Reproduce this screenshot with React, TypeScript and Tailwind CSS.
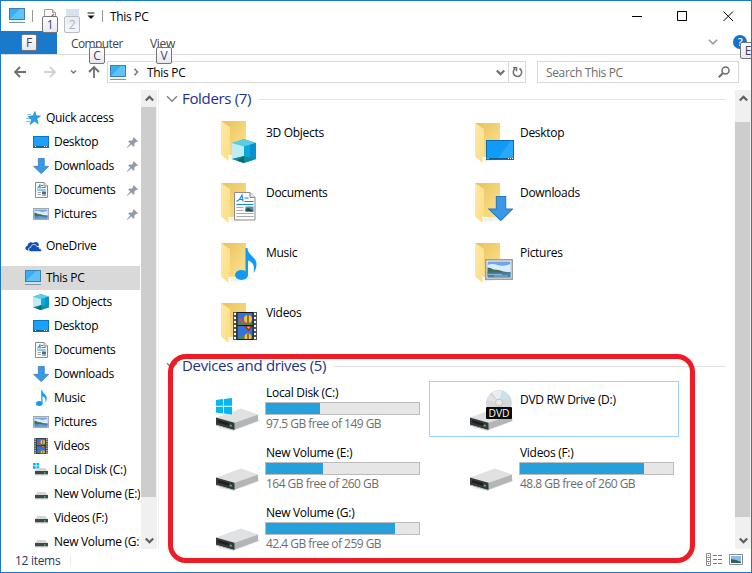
import React, { type ReactNode } from "react";

type P = { s?: number };

const Monitor = () => (
  <svg width="17" height="16" viewBox="0 0 17 16" className="shrink-0">
    <rect x="0.5" y="0.5" width="15" height="11" fill="#3aaef5" stroke="#3c7fae" />
    <path d="M1 11L11 1H15V11Z" fill="#5fc2fb" />
    <path d="M2 13h12" stroke="#dfe6ea" />
    <path d="M0 14.5h16" stroke="#7e98ab" />
  </svg>
);

const Desktop = () => (
  <svg width="16" height="12" viewBox="0 0 16 12" className="shrink-0">
    <rect x="0.5" y="0.5" width="15" height="11" fill="#1ba1f9" stroke="#0a74bd" />
    <path d="M1 10.5h14" stroke="#0a5d9c" />
    <path d="M2 10.5h1M11 10.5h1M13 10.5h1" stroke="#fff" />
  </svg>
);

const Down = ({ s = 16 }: P) => (
  <svg width={s} height={s} viewBox="0 0 24 24" className="shrink-0">
    <path d="M8 .5h9v12h6.5L12.300 23.500.8 12.500H8z" fill="#3b97e8" stroke="#2a78c2" />
  </svg>
);

const Doc = () => (
  <svg width="13" height="16" viewBox="0 0 13 16" className="shrink-0">
    <path d="M.5.5h8.500L12.500 4v11.500H.5z" fill="#fdfdfd" stroke="#8a8a8a" />
    <path d="M9 .5V4h3.500" fill="#e8e8e8" stroke="#8a8a8a" />
    <path d="M2.500 6.500L5 2.500v4M3.500 5h2M6 3.500h2M6.500 5.500h4M2.500 8h8" stroke="#2089d8" fill="none" />
    <path d="M2.500 10.500h3.500M2.500 12.500h3.500M7 13.500h4" stroke="#aaa" />
    <rect x="7" y="9.500" width="4" height="3" fill="#3c6e96" />
  </svg>
);

const Picture = ({ w = 16, h = 12 }: { w?: number; h?: number }) => (
  <svg width={w} height={h} viewBox="0 0 28 21" preserveAspectRatio="none" className="shrink-0">
    <rect x=".8" y=".8" width="26.400" height="19.400" fill="#fff" stroke="#9a9a9a" strokeWidth="1.500" />
    <rect x="2.500" y="2.500" width="23" height="16" fill="#6fa6f2" />
    <path d="M2.500 6q5-2 10 0t13-1v8h-23z" fill="#dcebf8" />
    <path d="M2.500 8.500q3 0 6 2l5 .5 5 1.500 7 1v1h-23z" fill="#3e6f56" />
    <path d="M2.500 13.500h23v5h-23z" fill="#4a7fa8" />
    <path d="M3 15.500h14M9 17h14" stroke="#87b4d4" />
  </svg>
);

const Note = ({ s = 16 }: P) => (
  <svg width={(s * 11) / 16} height={s} viewBox="0 0 22 32" className="shrink-0">
    <ellipse cx="6.500" cy="27" rx="6.500" ry="5" fill="#0f9bf5" />
    <path d="M10.500 27V0h2c0 7 9 9 9 16 0 4-1 6-3 9 1.500-7-.5-11-5.500-12.500V27z" fill="#0f9bf5" />
  </svg>
);

const Film = ({ w = 14, h = 16 }: { w?: number; h?: number }) => (
  <svg width={w} height={h} viewBox="0 0 24 28" preserveAspectRatio="none" className="shrink-0">
    <path d="M0 0h24v28H0z" fill="#555" />
    <path d="M2 1v27M22 1v27" stroke="#f4f4f4" strokeWidth="2" strokeDasharray="2 2" />
    <path d="M4 1h16v12H4z" fill="#3671d6" />
    <path d="M4 14h16v13H4z" fill="#3671d6" />
    <path d="M4 10q3-2 5 0t11 0v3H4z" fill="#458a50" />
    <path d="M4 26q5-3 9-1t7 0v2H4z" fill="#458a50" />
    <circle cx="7.500" cy="8" r="2" fill="#c84a63" />
    <circle cx="10" cy="10.500" r="2" fill="#c84a63" />
    <circle cx="15" cy="7" r="4" fill="#edc92e" />
    <path d="M15 3v8M12 14h7l-3.500 4z" stroke="#9a2b1c" fill="#edc92e" strokeWidth="1.300" />
    <circle cx="15" cy="25" r="3.500" fill="#edc92e" />
    <path d="M15 22v5" stroke="#9a2b1c" strokeWidth="1.300" />
    <path d="M4 .5v27h16V.5zM4 13.500h16" fill="none" stroke="#161616" />
  </svg>
);

const Cube = ({ s = 16 }: P) => (
  <svg width={s} height={s} viewBox="0 0 24 24" className="shrink-0">
    <path d="M12 0l12 4v16l-12 4L0 20V4z" fill="#2bb5d3" />
    <path d="M0 4L12 0l12 4-12 3.500z" fill="#5fcbe0" />
    <path d="M0 4l12 3.500V17L0 20z" fill="#c0ecf2" />
    <path d="M12 7.500L24 4v16l-12-3z" fill="#08a9dc" />
    <path d="M18 5.800L24 4v16l-6-1.500z" fill="#0792ce" />
    <path d="M0 20l12-3 12 3-12 4z" fill="#0d8ba0" />
    <path d="M12 17v7l-7-2.300z" fill="#066a7c" />
  </svg>
);

const Star = () => (
  <svg width="15" height="14" viewBox="0 0 15 14" className="shrink-0">
    <path d="M9 .5l1 4.200 4.500.3-3.700 2.700 1.500 5L8.500 10.300 4 13.500l1.500-4.800L2 5.500l5-.8z" fill="#2b9fe9" stroke="#1b7fc9" strokeWidth=".6" />
    <path d="M1 3.500h4M0 7.500h4M0 10.500h4" stroke="#6ebcf0" strokeWidth=".9" />
  </svg>
);

const Cloud = () => (
  <svg width="17" height="11" viewBox="0 0 17 11" className="shrink-0">
    <path d="M3.500 9.500C-.5 9.500-.5 5.500 2.500 5 2.500 1.500 6 .2 8 2c3-2.200 6-.5 6 2.500" fill="#1450b0" />
    <path d="M6.500 10.700c-4 0-3.700-4.200-.8-4.300C6 3 11 2.500 12 5.500c2-.2 2.600 1 2.500 2 3 .5 2.500 3.200.5 3.200z" fill="#1450b0" stroke="#fff" strokeWidth=".8" />
  </svg>
);

const MiniDrive = ({ win = false }: { win?: boolean }) => (
  <svg width="16" height="16" viewBox="0 0 16 16" className="shrink-0">
    {win && <path d="M0 1h2.700v2.500H0zM3.500 1h2.700v2.500H3.500zM0 4.300h2.700v2.500H0zM3.500 4.300h2.700v2.500H3.500z" fill="#00b4f0" />}
    <path d="M4.500 6h8L15 9.500H2z" fill="#d5d7d8" />
    <path d="M2 9h13v3.500H2z" fill="#424648" />
    <path d="M2 12.500h13v.8H2z" fill="#c4c4c4" />
    <path d="M11 10.500h1.500v1.300H11z" fill="#3ee049" />
  </svg>
);

const Pin = () => (
  <svg width="11" height="11" viewBox="0 0 11 11" className="shrink-0">
    <path d="M6.500 0L11 4.300 9.800 5l-.6-.3L7.300 6.600l.2 2.300-.9.9-2.400-2.200L.6 10.700 0 10.800l.2-.8 3.100-3.400L1.200 4.400l.9-.9 2.400.2L6.300 1.900 5.900 1z" fill="#8e9ba8" />
  </svg>
);

const DriveArt = () => (
  <>
    <path d="M4 43l16 3 27-10-2-4z" fill="#ededed" />
    <path d="M3 32.500L28 23.500l17 6-23.500 8.300z" fill="#dfe1e3" />
    <path d="M21.500 37.800L45 29.500V36L20.500 45z" fill="#b3b5b7" />
    <path d="M3 32.500l18.500 5.300V45L3 39.800z" fill="#35393b" />
    <path d="M5 35l11 3.300v2.500L5 37.500z" fill="#1c1f20" />
    <path d="M3 39.800L21 45v.6L3 40.600z" fill="#a6a8a9" />
    <path d="M16.800 39.500l2 .5v1.700l-2-.5z" fill="#2fe03f" />
  </>
);

const Drive = ({ win = false, dvd = false }: { win?: boolean; dvd?: boolean }) => (
  <svg width="48" height="48" viewBox="0 0 48 48">
    <DriveArt />
    {win && <path d="M3 15l7-.9v6.700H3zM10.900 14L19 13v7.800h-8.100zM3 21.700h7v6.700l-7-1zM10.900 21.700H19v7.700l-8.100-1z" fill="#00b9f2" />}
    {dvd && (
      <>
        <circle cx="32" cy="18" r="12.500" fill="#d6d8da" stroke="#c0c2c4" strokeWidth=".5" />
        <path d="M32 18L37 6.500a12.500 12.500 0 0 1 5 4z" fill="#bdeaf2" />
        <path d="M32 18l-12-3a12.500 12.500 0 0 1 3-5.500z" fill="#eadcec" />
        <path d="M32 18l-7-10.500q5-3 10-1.500z" fill="#eceded" />
        <circle cx="32" cy="17.500" r="3.500" fill="#efefef" stroke="#b4b6b8" strokeWidth=".8" />
        <circle cx="32" cy="17.500" r="1.500" fill="#fff" stroke="#bbb" strokeWidth=".5" />
        <rect x="19" y="22" width="26" height="12" rx="1" fill="#0c0c0c" />
        <text x="32" y="32" textAnchor="middle" fontSize="11" letterSpacing="0" fill="#fff" fontFamily="Open Sans, Noto Sans, sans-serif" textLength="21" lengthAdjust="spacingAndGlyphs">DVD</text>
      </>
    )}
  </svg>
);

const Folder = ({ children, x, y, up = false }: { children: ReactNode; x: string; y: string; up?: boolean }) => (
  <div className="relative h-12 w-12">
    <svg width="48" height="48" viewBox="0 0 48 48">
      <defs>
        <linearGradient id="fb" x1="0" x2="1" y1="0" y2="1">
          <stop offset="0" stopColor="#e8c15a" />
          <stop offset=".6" stopColor="#f5d67b" />
          <stop offset="1" stopColor="#fce28e" />
        </linearGradient>
        <linearGradient id="ff" x1="0" x2="1" y1="0" y2="1">
          <stop offset="0" stopColor="#ffe9a6" />
          <stop offset="1" stopColor="#fbdc83" />
        </linearGradient>
      </defs>
      <g transform={up ? "translate(0 -2)" : undefined}>
        <path d="M16 40l20-2 4 3-22 3z" fill="#f1f1f1" />
        <path d="M8 5h25v34l-17 0z" fill="url(#fb)" />
        <path d="M8 5l9 6v26l-1.500 1v7L8 38.500z" fill="url(#ff)" />
      </g>
    </svg>
    <div className={`absolute ${x} ${y}`}>{children}</div>
  </div>
);

const BigDoc = () => (
  <svg width="22" height="29" viewBox="0 0 22 29">
    <path d="M.5.500h15.500l5 5V28H.5z" fill="#fcfcfc" stroke="#8b8b8b" />
    <path d="M16 .5v5h5" fill="#e4e4e4" stroke="#8b8b8b" />
    <path d="M2.500 9.500Q6 8 8 3l1 6.500M5 7.500h4M10.500 6h4M10.500 9.500h9M2.500 12.500h17" stroke="#1a86d4" fill="none" strokeWidth="1.100" />
    <path d="M2.500 15.500h7M2.500 18.500h7M2.500 21.500h17M2.500 24.500h17" stroke="#a9a9a9" />
    <rect x="11.500" y="14.500" width="8" height="5" fill="#4f8dbb" />
    <path d="M11.500 17l3-1 5 3v.5h-8z" fill="#235240" />
  </svg>
);

const BigDesktop = () => (
  <svg width="28" height="20" viewBox="0 0 28 20">
    <rect x=".5" y=".5" width="27" height="19" fill="#109bf6" stroke="#0b6cb3" />
    <path d="M12 18L25 1h2v17z" fill="#2aa9fb" />
    <path d="M1 18.500h26" stroke="#0a5c9b" />
    <path d="M1.500 18.500h1M22 18.500h1M24 18.500h1M26 18.500h1" stroke="#fff" />
  </svg>
);

const Chevron = ({ dir = "down", c = "#606060", w = 8, sw = 2 }: { dir?: "down" | "up" | "right"; c?: string; w?: number; sw?: number }) => (
  <svg width={w} height={w} viewBox="0 0 8 8" className="shrink-0">
    <path d={dir === "down" ? "M.7 2.200L4 5.500l3.300-3.300" : dir === "up" ? "M.7 5.800L4 2.500l3.300 3.300" : "M2.500.8L5.500 4 2.500 7.200"} fill="none" stroke={c} strokeWidth={sw} />
  </svg>
);

const KeyTip = ({ k, pos, dim = false }: { k: string; pos: string; dim?: boolean }) => (
  <div
    className={`absolute z-10 flex h-[17px] w-[16px] items-center justify-center rounded-[2px] border text-[12px] leading-none ${pos} ${
      dim ? "border-[#b9bcc0] bg-[#eef1f6]/80 text-[#adb2ba]" : "border-[#757575] bg-gradient-to-b from-white to-[#e6e8f0] text-[#444460]"
    }`}
  >
    {k}
  </div>
);

const NavRow = ({ icon, label, root = false, pin = false, sel = false }: { icon: ReactNode; label: string; root?: boolean; pin?: boolean; sel?: boolean }) => (
  <div className={`flex h-6 w-[139px] shrink-0 items-center overflow-hidden ${root ? "pl-6" : "pl-8"} ${sel ? "bg-[#d9d9d9]" : ""}`}>
    <span className="flex w-[16px] shrink-0 justify-center">{icon}</span>
    <span className="ml-[5px] flex-1 whitespace-nowrap">{label}</span>
    {pin && <span className="mr-[2px]"><Pin /></span>}
  </div>
);

const Group = ({ title, children }: { title: string; children: ReactNode }) => (
  <section>
    <div className="flex h-[30px] items-center">
      <span className="ml-[7px] flex w-3 justify-center"><Chevron c="#808080" w={12} sw={0.9} /></span>
      <h2 className="ml-1 whitespace-nowrap pb-px text-[15px] tracking-[-0.33px] text-[#1e3287]">{title}</h2>
      <span className="mr-[9px] ml-2 h-px flex-1 bg-[#e2e2e2]" />
    </div>
    <div className="ml-4 grid grid-cols-[250px_250px] gap-x-1 gap-y-1">{children}</div>
  </section>
);

const Item = ({ icon, label }: { icon: ReactNode; label: string }) => (
  <div className="flex h-14 pt-1 pl-[38px]">
    {icon}
    <span className="ml-[5px] pt-[7px] leading-[16px]">{label}</span>
  </div>
);

const DriveItem = ({ icon, label, used, free }: { icon: ReactNode; label: string; used: number; free: string }) => (
  <div className="flex h-14 pt-1 pl-[38px]">
    {icon}
    <div className="ml-1 w-[155px]">
      <div className="pl-px leading-[16px]">{label}</div>
      <div className="mt-px h-[13px] border border-[#bcbcbc] bg-[#e6e6e6]">
        <div className="h-full bg-[#26a0da]" style={{ width: used }} />
      </div>
      <div className="mt-px whitespace-nowrap pl-px leading-[16px] tracking-[-0.52px] text-[#6d6d6d]">{free}</div>
    </div>
  </div>
);

const Scroll = ({ thumb }: { thumb: string }) => (
  <div className="flex h-full w-[16px] shrink-0 flex-col bg-[#f0f0f0]">
    <div className="flex h-[17px] items-center justify-center"><Chevron dir="up" w={9} /></div>
    <div className={`w-[15px] bg-[#cdcdcd] ${thumb}`} />
    <div className="mt-auto flex h-[17px] items-center justify-center"><Chevron w={9} /></div>
  </div>
);

export default function App() {
  return (
    <div className="relative flex h-[573px] w-[752px] flex-col overflow-hidden border border-[#1979ca] bg-white font-['Open_Sans','Noto_Sans',sans-serif] text-[12px] tracking-[-0.3px] text-black">
      <header className="relative flex h-[30px] shrink-0 items-center">
        <span className="ml-2"><Monitor /></span>
        <span className="ml-[6px] h-3 w-px bg-[#999]" />
        <svg width="12" height="15" viewBox="0 0 12 15" className="ml-[11px]">
          <path d="M.5.500h8l3 3v11H.5z" fill="#fafafa" stroke="#a0a0a0" />
          <path d="M8.500.5v3h3" fill="#ddd" stroke="#a0a0a0" />
          <path d="M3 8l2 2 5-5" stroke="#e05c36" strokeWidth="1.500" fill="none" />
        </svg>
        <span className="ml-[10px] h-[15px] w-[13px] bg-[#d6e2f2]" />
        <svg width="8" height="8" viewBox="0 0 8 8" className="ml-2">
          <path d="M.5 1h7" stroke="#111" />
          <path d="M.5 3.500h7L4 7z" fill="#111" />
        </svg>
        <span className="ml-[7px] h-3 w-px bg-[#999]" />
        <span className="ml-[7px] pt-px">This PC</span>
        <svg width="102" height="12" viewBox="0 0 102 12" className="mr-[17px] ml-auto" fill="none" stroke="#000">
          <path d="M0 6.500h10M45.500 1.500h9v9h-9zM91.500 1.500l9.500 9.500M101 1.500L91.500 11" />
        </svg>
        <KeyTip k="1" pos="left-[41px] top-[15px]" />
        <KeyTip k="2" dim pos="left-[63px] top-[15px]" />
      </header>

      <nav className="relative flex h-[24px] shrink-0 border-b border-[#dadbdc] text-[#444]">
        <div className="h-[23px] w-14 bg-[#1979ca]" />
        <span className="ml-[14px] w-[52px] leading-[25px] tracking-[-0.6px]">Computer</span>
        <span className="ml-[27px] leading-[25px]">View</span>
        <span className="mt-[6px] mr-[15px] ml-auto"><Chevron c="#999" w={10} sw={1.300} /></span>
        <span className="mt-1 mr-1 flex h-[14px] w-[14px] items-center justify-center rounded-full bg-[#0f74cc] text-[11px] font-semibold text-white">?</span>
        <KeyTip k="F" pos="left-[20px] top-[3px]" />
        <KeyTip k="C" pos="left-[88px] top-[16px]" />
        <KeyTip k="V" pos="left-[155px] top-[16px]" />
        <KeyTip k="E" pos="left-[739px] top-[11px]" />
      </nav>

      <div className="mb-px flex h-[34px] shrink-0 items-center">
        <svg width="90" height="14" viewBox="0 0 90 14" className="ml-[13px]" fill="none" strokeWidth="1.800">
          <path d="M12 7H1.500M6 2L1 7l5 5" stroke="#6e6e6e" />
          <path d="M30 7h10.500M36 2l5 5-5 5" stroke="#d2d2d2" />
          <path d="M57 5.500l2.500 2.500L62 5.500" stroke="#777" strokeWidth="1.500" />
          <path d="M80 13V2M75 7l5-5 5 5" stroke="#6e6e6e" />
        </svg>
        <div className="ml-[3px] flex h-[22px] w-[419px] items-center border border-[#d9d9d9]">
          <span className="ml-[2px] pt-[1px]"><Monitor /></span>
          <span className="ml-[5px]"><Chevron dir="right" c="#777" sw={1.600} /></span>
          <span className="ml-[7px] pt-px">This PC</span>
          <span className="mr-[3px] ml-auto"><Chevron c="#707070" w={9} /></span>
          <span className="flex h-full w-[17px] items-center justify-center border-l border-[#d9d9d9]">
            <svg width="11" height="12" viewBox="0 0 11 12" fill="none" stroke="#6e6e6e" strokeWidth="1.500">
              <path d="M7.500 2.500A4.200 4.200 0 1 1 3 2.800M1 1.800h3.500v3.500" />
            </svg>
          </span>
        </div>
        <div className="ml-[11px] flex h-[22px] w-[202px] items-center justify-between border border-[#d9d9d9] pr-2 pl-2 text-[#6d6d6d]">
          <span className="pt-px tracking-[-0.35px]">Search This PC</span>
          <svg width="12" height="12" viewBox="0 0 12 12" fill="none" stroke="#6e6e6e">
            <circle cx="7.500" cy="4.500" r="3.500" strokeWidth="1.500" />
            <path d="M5 7L.8 11.200" strokeWidth="2" />
          </svg>
        </div>
      </div>

      <main className="flex h-[459px] shrink-0">
        <aside className="flex w-[140px] shrink-0 flex-col overflow-hidden pt-[16px]">
          <NavRow root icon={<Star />} label="Quick access" />
          <NavRow pin icon={<Desktop />} label="Desktop" />
          <NavRow pin icon={<Down />} label="Downloads" />
          <NavRow pin icon={<Doc />} label="Documents" />
          <NavRow pin icon={<Picture />} label="Pictures" />
          <div className="h-2 shrink-0" />
          <NavRow root icon={<Cloud />} label="OneDrive" />
          <div className="h-2 shrink-0" />
          <NavRow root sel icon={<Monitor />} label="This PC" />
          <NavRow icon={<Cube />} label="3D Objects" />
          <NavRow icon={<Desktop />} label="Desktop" />
          <NavRow icon={<Doc />} label="Documents" />
          <NavRow icon={<Down />} label="Downloads" />
          <NavRow icon={<Note />} label="Music" />
          <NavRow icon={<Picture />} label="Pictures" />
          <NavRow icon={<Film />} label="Videos" />
          <NavRow icon={<MiniDrive win />} label="Local Disk (C:)" />
          <NavRow icon={<MiniDrive />} label="New Volume (E:)" />
          <NavRow icon={<MiniDrive />} label="Videos (F:)" />
          <NavRow icon={<MiniDrive />} label="New Volume (G:)" />
        </aside>
        <Scroll thumb="h-[390px]" />
        <span className="ml-[1px] h-full w-px bg-[#f0f0f0]" />
        <div className="-mt-[6px] flex flex-1 flex-col gap-px">
          <Group title="Folders (7)">
            <Item icon={<Folder up x="left-[19px]" y="top-[21px]"><Cube s={24} /></Folder>} label="3D Objects" />
            <Item icon={<Folder x="left-[19px]" y="top-[22px]"><BigDesktop /></Folder>} label="Desktop" />
            <Item icon={<Folder x="left-[21px]" y="top-[14px]"><BigDoc /></Folder>} label="Documents" />
            <Item icon={<Folder x="left-[21px]" y="top-[18px]"><Down s={25} /></Folder>} label="Downloads" />
            <Item icon={<Folder x="left-[22px]" y="top-[10px]"><Note s={32} /></Folder>} label="Music" />
            <Item icon={<Folder x="left-[18px]" y="top-[21px]"><Picture w={28} h={21} /></Folder>} label="Pictures" />
            <Item icon={<Folder x="left-[20px]" y="top-[14px]"><Film w={24} h={28} /></Folder>} label="Videos" />
          </Group>
          <Group title="Devices and drives (5)">
            <DriveItem icon={<Drive win />} label="Local Disk (C:)" used={54} free="97.5 GB free of 149 GB" />
            <div className="flex h-14 border border-[#99d1ff] pt-[3px] pl-[37px]">
              <Drive dvd />
              <span className="ml-[5px] pt-[7px] leading-[16px]">DVD RW Drive (D:)</span>
            </div>
            <DriveItem icon={<Drive />} label="New Volume (E:)" used={57} free="164 GB free of 260 GB" />
            <DriveItem icon={<Drive />} label="Videos (F:)" used={124} free="48.8 GB free of 260 GB" />
            <DriveItem icon={<Drive />} label="New Volume (G:)" used={129} free="42.4 GB free of 259 GB" />
          </Group>
        </div>
        <Scroll thumb="mt-[15px] h-[395px]" />
      </main>

      <footer className="flex flex-1 items-center pt-px">
        <span className="ml-[14px] text-[#1e395b]">12 items</span>
        <span className="ml-[10px] h-3 w-px bg-[#eee]" />
        <svg width="37" height="13" viewBox="0 0 37 13" className="mr-2 mb-1 ml-auto" fill="none">
          <path d="M.5.500h4v12h-4zM.5 4.500h4M.5 8.500h4" stroke="#8c8c8c" />
          <path d="M7 2.500h4M12 2.500h4M7 6.500h4M12 6.500h4M7 10.500h4M12 10.500h4" stroke="#777" />
          <path d="M2 2.500h1" stroke="#2a7" />
          <path d="M2 6.500h1" stroke="#27c" />
          <path d="M2 10.500h1" stroke="#d42" />
          <path d="M23.500 1.500h13v10h-13z" fill="#fff" stroke="#8c8c8c" />
          <path d="M25 3h10v7H25z" fill="#8bbcf0" />
          <path d="M25 6l5 1 5 2v1H25z" fill="#2d6253" />
        </svg>
      </footer>

      <div className="pointer-events-none absolute top-[353px] left-[167px] h-[209px] w-[527px] rounded-[18px] border-[5px] border-[#ed1c24]" />
    </div>
  );
}
